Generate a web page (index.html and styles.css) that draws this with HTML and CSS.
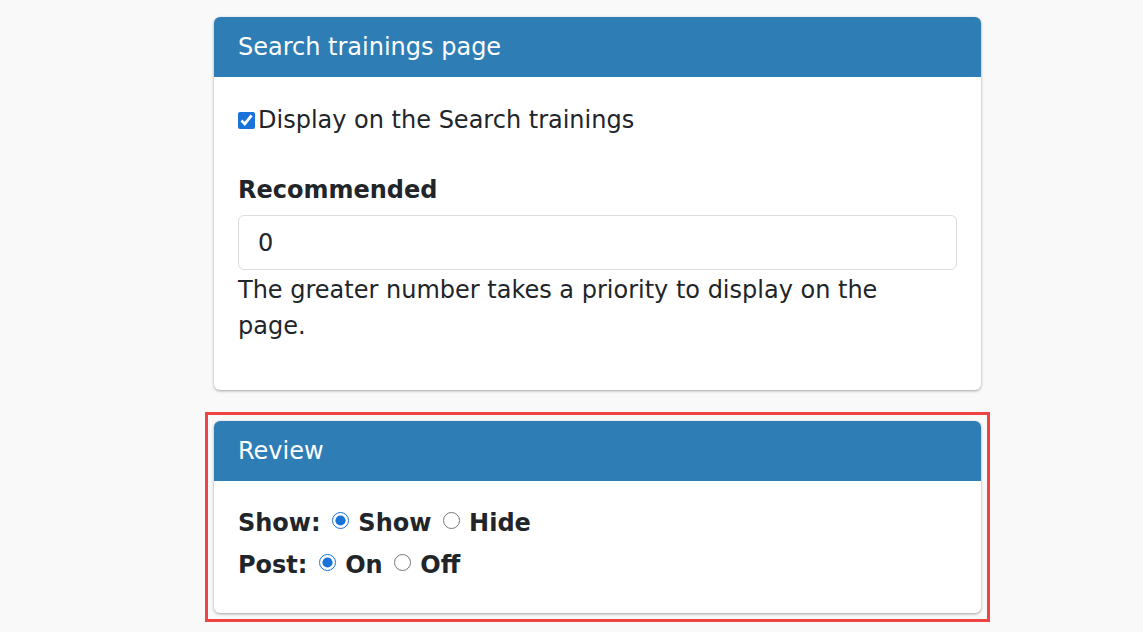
FILE: index.html
```html
<!DOCTYPE html>
<html lang="en">
<head>
    <meta charset="UTF-8">
    <meta name="viewport" content="width=device-width, initial-scale=1.0">
    <title>Training settings</title>
    <link rel="stylesheet" href="styles.css">
</head>
<body>
    <div class="page">
        <div class="card">
            <div class="card-header">Search trainings page</div>
            <div class="card-body">
                <label class="check"><input type="checkbox" checked>Display on the Search trainings</label>
                <div class="field">
                    <label class="field-label" for="recommended">Recommended</label>
                    <input type="text" id="recommended" class="text-input" value="0">
                    <p class="help">The greater number takes a priority to display on the page.</p>
                </div>
            </div>
        </div>

        <div class="highlight">
            <div class="card">
                <div class="card-header">Review</div>
                <div class="card-body review">
                    <div class="radio-row">
                        <span>Show:</span>
                        <label><input type="radio" name="show" checked> Show</label>
                        <label><input type="radio" name="show"> Hide</label>
                    </div>
                    <div class="radio-row">
                        <span>Post:</span>
                        <label><input type="radio" name="post" checked> On</label>
                        <label><input type="radio" name="post"> Off</label>
                    </div>
                </div>
            </div>
        </div>
    </div>
</body>
</html>
```

FILE: styles.css
```css
body {
    margin: 0;
    background-color: #f9f9f9;
    font-family: "DejaVu Sans", Verdana, sans-serif;
    font-size: 24px;
    color: #212529;
}
.page {
    width: 767px;
    margin-left: 214px;
    padding: 17px 0 20px;
    display: flex;
    flex-direction: column;
    gap: 22px;
}
.card {
    background: white;
    border-radius: 6px;
    box-shadow: 0 1px 3px rgba(0, 0, 0, 0.35);
}
.card-header {
    background-color: #2e7db5;
    color: white;
    height: 60px;
    line-height: 60px;
    padding: 0 24px;
    border-radius: 6px 6px 0 0;
}
.card-body {
    padding: 25px 24px 46px;
}
.check {
    display: flex;
    align-items: center;
    height: 36px;
}
.check input {
    width: 17px;
    height: 17px;
    margin: 0 3px 0 0;
    accent-color: #1a73d9;
}
.field {
    margin-top: 34px;
}
.field-label {
    display: block;
    font-weight: bold;
    line-height: 36px;
    margin-bottom: 7px;
}
.text-input {
    display: block;
    box-sizing: border-box;
    width: 100%;
    height: 55px;
    padding: 0 19px;
    border: 1px solid #dcdcdc;
    border-radius: 6px;
    font-family: inherit;
    font-size: 24px;
    color: #212529;
}
.help {
    margin: 2px 0 0;
    padding-right: 60px;
    line-height: 36px;
}
.highlight {
    margin: 0 -9px;
    padding: 6px;
    border: 3px solid #f04444;
}
.review {
    padding: 21px 24px 27px;
}
.radio-row {
    font-weight: bold;
    line-height: 42px;
}
.radio-row input {
    width: 17px;
    height: 17px;
    margin: 0 1px 0 3px;
    vertical-align: 2px;
    accent-color: #1a73d9;
}
```
